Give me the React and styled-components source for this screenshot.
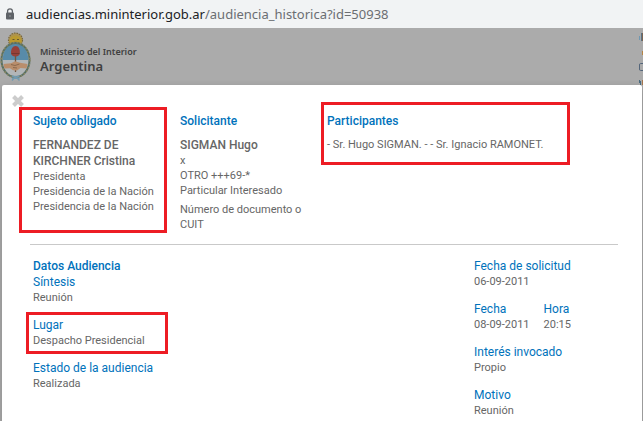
import React from "react";
import styled, { createGlobalStyle } from 'styled-components';

const participants = ['Sr. Hugo SIGMAN.', 'Sr. Ignacio RAMONET.'];

function Lock() {
    return (
        <svg width="10" height="12" viewBox="0 0 10 12" aria-hidden="true">
            <path d="M2.6 5V3.2a2.4 2.4 0 0 1 4.8 0V5" fill="none" stroke="#5f6368" strokeWidth="1.3" />
            <rect x="1" y="4.4" width="8" height="7.2" rx="1" fill="#5f6368" />
            <circle cx="5" cy="8" r="0.9" fill="#85898d" />
        </svg>
    );
}

function Arms() {
    return (
        <svg width="32" height="50" viewBox="0 0 32 50" aria-hidden="true">
            <circle cx="15.5" cy="8" r="7" fill="#ad9350" stroke="#77673c" strokeWidth="1.2" strokeDasharray="1.6 1" />
            <path d="M9.5 9a6 5.5 0 0 1 12 0v3h-12z" fill="#b99a30" />
            <path d="M12.5 7.5h2M17 7.5h2M14 10.4h3.4" stroke="#66572f" strokeWidth="1" />
            <ellipse cx="15.5" cy="28" rx="13.2" ry="16.5" fill="#b2b6b8" />
            <path d="M2.8 28C2.3 19 8 11.7 15.5 11.7S28.7 19 28.2 28z" fill="#588ba9" />
            <ellipse cx="15.5" cy="28" rx="14" ry="17" fill="none" stroke="#587064" strokeWidth="2" />
            <ellipse cx="15.5" cy="28" rx="14.4" ry="17.4" fill="none" stroke="#8b8760" strokeWidth="1.4" strokeDasharray="1.6 2" />
            <path d="M15.5 22v18" stroke="#70543e" strokeWidth="1.3" />
            <path d="M11 21c0-4 1.600-7 4.500-7 3.200 0 4.800 3.400 4.300 7 0 2.200-1.600 3.400-4.300 3.400S11 23.200 11 21z" fill="#974039" />
            <path d="M11.5 21.5h8" stroke="#743630" strokeWidth="1" />
            <path d="M3.5 32l7.5-.8 4-2 5 1.5 7.5 1.3-1 4.5-6-.5-3.5 2.5-4-.3-3-2-5.500.3z" fill="#b98e6c" />
            <path d="M11 32.5l4 1 4.5-1.5M13 35.5l4 .5" fill="none" stroke="#806044" strokeWidth=".8" />
            <path d="M12 48.5l3.5-4 4 4M12 44l7.5 2.5M19.5 44L12 46.5" fill="none" stroke="#739bb0" strokeWidth="1.4" />
        </svg>
    );
}

function Cross() {
    return (
        <svg width="14" height="14" viewBox="0 0 14 14" aria-hidden="true">
            <path d="M2.5 2.500l9 9M11.5 2.500l-9 9" stroke="#cccccc" strokeWidth="4" />
        </svg>
    );
}

function Badge() {
    return (
        <svg width="4" height="57" viewBox="0 0 4 57" aria-hidden="true">
            <path d="M.5 8v4" stroke="#6f98b2" />
            <path d="M2.500 5v8" stroke="#5a7486" />
            <path d="M3.500 5v8" stroke="#7d6552" />
            <path d="M3.500 23v4" stroke="#b58445" />
            <path d="M4 35.500H1.500Q.5 35.500.5 37v4q0 1.500 1 1.500H4" fill="none" stroke="#53657a" />
            <path d="M.5 52v3M1.500 53v4" stroke="#496b80" />
            <path d="M3.500 52v5" stroke="#a5764e" />
        </svg>
    );
}

function Field({ label, value, marked }) {
    return (
        <Entry>
            <Label>{label}</Label>
            <Value>{value}</Value>
            {marked && <Mark $inset="-5px -23px -6px -7px" />}
        </Entry>
    );
}

function App() {
    return (
        <Page>
            <GlobalStyle />
            <AddressBar>
                <Lock />
                <Address>audiencias.mininterior.gob.ar<span>/audiencia_historica?id=50938</span></Address>
            </AddressBar>
            <Backdrop>
                <SiteHeader>
                    <Arms />
                    <SiteName>
                        <Ministry>Ministerio del Interior</Ministry>
                        <Country>Argentina</Country>
                    </SiteName>
                    <Badge />
                </SiteHeader>
                <Modal role="dialog" aria-label="Audiencia">
                    <Close type="button" aria-label="Cerrar"><Cross /></Close>
                    <People>
                        <Person>
                            <Heading>Sujeto obligado</Heading>
                            <Name>FERNANDEZ DE KIRCHNER Cristina</Name>
                            <Value>Presidenta</Value>
                            <Value>Presidencia de la Nación</Value>
                            <Value>Presidencia de la Nación</Value>
                            <Mark $inset="-6px -1px -1px 0" />
                        </Person>
                        <Person>
                            <Heading>Solicitante</Heading>
                            <Name>SIGMAN Hugo</Name>
                            <Value>x</Value>
                            <Value>OTRO +++69-*</Value>
                            <Value>Particular Interesado</Value>
                            <DocumentId>Número de documento o CUIT</DocumentId>
                        </Person>
                        <Participants>
                            <Heading>Participantes</Heading>
                            <Value>- {participants.join(' - - ')}</Value>
                            <Mark $inset="-11px 48px -13px 8px" />
                        </Participants>
                    </People>
                    <Divider />
                    <Details>
                        <div>
                            <Subtitle>Datos Audiencia</Subtitle>
                            <Field label="Síntesis" value="Reunión" />
                            <Field label="Lugar" value="Despacho Presidencial" marked />
                            <Field label="Estado de la audiencia" value="Realizada" />
                        </div>
                        <div>
                            <Field label="Fecha de solicitud" value="06-09-2011" />
                            <Pair>
                                <Field label="Fecha" value="08-09-2011" />
                                <Field label="Hora" value="20:15" />
                            </Pair>
                            <Field label="Interés invocado" value="Propio" />
                            <Field label="Motivo" value="Reunión" />
                        </div>
                    </Details>
                </Modal>
            </Backdrop>
        </Page>
    );
}

const GlobalStyle = createGlobalStyle`
    * {
        box-sizing: border-box;
    }

    body {
        margin: 0;
        background: #ababab;
        font-family: Roboto, sans-serif;
    }

    h1, h2, h3, p {
        margin: 0;
    }
`;

const Page = styled.div`
    display: flex;
    flex-direction: column;
    min-height: 100vh;
`;

const AddressBar = styled.div`
    display: flex;
    align-items: center;
    gap: 11px;
    height: 28px;
    padding: 0 5px;
    background: #f1f3f4;
`;

const Address = styled.div`
    font-family: "Noto Sans", sans-serif;
    font-size: 13px;
    line-height: 20px;
    white-space: nowrap;
    color: #202124;

    span {
        color: #6b6e72;
    }
`;

const Backdrop = styled.div`
    flex: 1;
    display: flex;
    flex-direction: column;
    background: #ababab;
`;

const SiteHeader = styled.header`
    display: flex;
    align-items: center;
    gap: 8px;
    height: 57px;
`;

const SiteName = styled.div`
    flex: 1;
    padding-top: 6px;
    color: #404040;
    font-family: "Noto Sans", sans-serif;
    font-weight: 600;
`;

const Ministry = styled.p`
    font-size: 9px;
    line-height: 13px;
`;

const Country = styled.p`
    font-size: 13px;
    line-height: 16px;
`;

const Modal = styled.main`
    position: relative;
    flex: 1;
    margin: 0 1px 0 2px;
    padding: 28px 24px 0 17px;
    border-radius: 2px 2px 0 0;
    background: white;
    box-shadow: 0 3px 9px rgba(0, 0, 0, 0.2);
`;

const Close = styled.button`
    position: absolute;
    top: 9px;
    left: 9px;
    display: flex;
    padding: 0;
    border: none;
    background: none;
    cursor: pointer;
`;

const People = styled.div`
    display: grid;
    grid-template-columns: 147px 147px 1fr;
`;

const Person = styled.section`
    position: relative;
    padding: 0 4px 0 14px;
`;

const Participants = styled(Person)`
    align-self: start;
`;

const Heading = styled.h2`
    margin-bottom: 7px;
    font-size: 12px;
    line-height: 17px;
    font-weight: 500;
    color: #0072bb;
`;

const Name = styled.h3`
    font-size: 12px;
    line-height: 16px;
    font-weight: 500;
    color: #666666;
`;

const Value = styled.p`
    font-size: 11px;
    line-height: 15px;
    color: #666666;
`;

const DocumentId = styled(Value)`
    margin-top: 4px;
`;

const Divider = styled.hr`
    height: 1px;
    margin: 12px 0 13px 11px;
    border: none;
    background: #c9c9c9;
`;

const Details = styled.div`
    display: grid;
    grid-template-columns: 1fr 144px;
    padding-left: 14px;
`;

const Subtitle = styled(Heading)`
    margin: 0;
    line-height: 16px;
`;

const Entry = styled.div`
    position: relative;
    width: fit-content;
    margin-bottom: 12px;
`;

const Label = styled.h3`
    font-size: 12px;
    line-height: 16px;
    font-weight: 400;
    color: #0072bb;
`;

const Pair = styled.div`
    display: flex;
    gap: 14px;
`;

const Mark = styled.div`
    position: absolute;
    inset: ${(props) => props.$inset};
    border: 3px solid #ed1c24;
    pointer-events: none;
`;

export default App;
